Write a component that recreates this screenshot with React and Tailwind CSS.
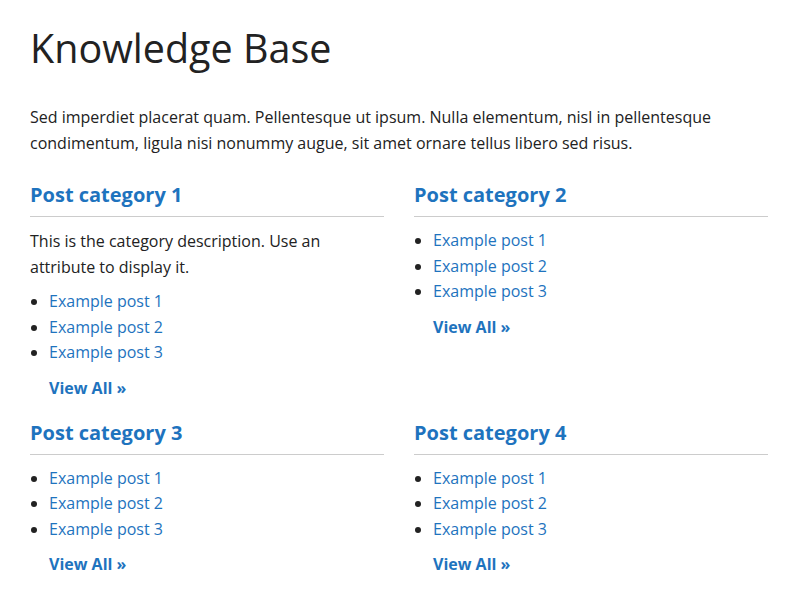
const categories = [
  { name: 'Post category 1', desc: 'This is the category description. Use an attribute to display it.' },
  { name: 'Post category 2' },
  { name: 'Post category 3' },
  { name: 'Post category 4' },
]

const posts = ['Example post 1', 'Example post 2', 'Example post 3']

function Category({ cat }) {
  return (
    <div className="flex flex-col">
      <h2 className="text-[20px] font-bold leading-[30px] text-[#1e73be] pb-[6px] border-b border-[#cccccc]">
        <a href="#">{cat.name}</a>
      </h2>
      {cat.desc && (
        <p className="mt-[11px] pr-[40px] leading-[26px]">{cat.desc}</p>
      )}
      <ul className={cat.desc ? 'list-disc pl-[19px] mt-[9px] leading-[25.5px]' : 'list-disc pl-[19px] mt-[11px] leading-[25.5px]'}>
        {posts.map((p) => (
          <li key={p}>
            <a href="#" className="text-[#1e73be]">{p}</a>
          </li>
        ))}
      </ul>
      <a href="#" className="ml-[19px] mt-[10px] font-bold text-[#1e73be] leading-[24px]">View All »</a>
    </div>
  )
}

export default function App() {
  return (
    <div className="min-h-screen bg-white text-[#222222] text-[16px] pl-[30px] pt-[20px] pb-[30px]" style={{ fontFamily: '"Open Sans", "Noto Sans", sans-serif' }}>
      <div className="w-[738px]">
        <h1 className="text-[39.5px] font-normal leading-[56px] text-[#222222]">Knowledge Base</h1>
        <p className="mt-[28px] leading-[26px]">
          Sed imperdiet placerat quam. Pellentesque ut ipsum. Nulla elementum, nisl in pellentesque condimentum, ligula nisi nonummy augue, sit amet ornare tellus libero sed risus.
        </p>
        <div className="grid grid-cols-2 gap-x-[30px] gap-y-[18px] mt-[24px]">
          {categories.map((c) => (
            <Category key={c.name} cat={c} />
          ))}
        </div>
      </div>
    </div>
  )
}
